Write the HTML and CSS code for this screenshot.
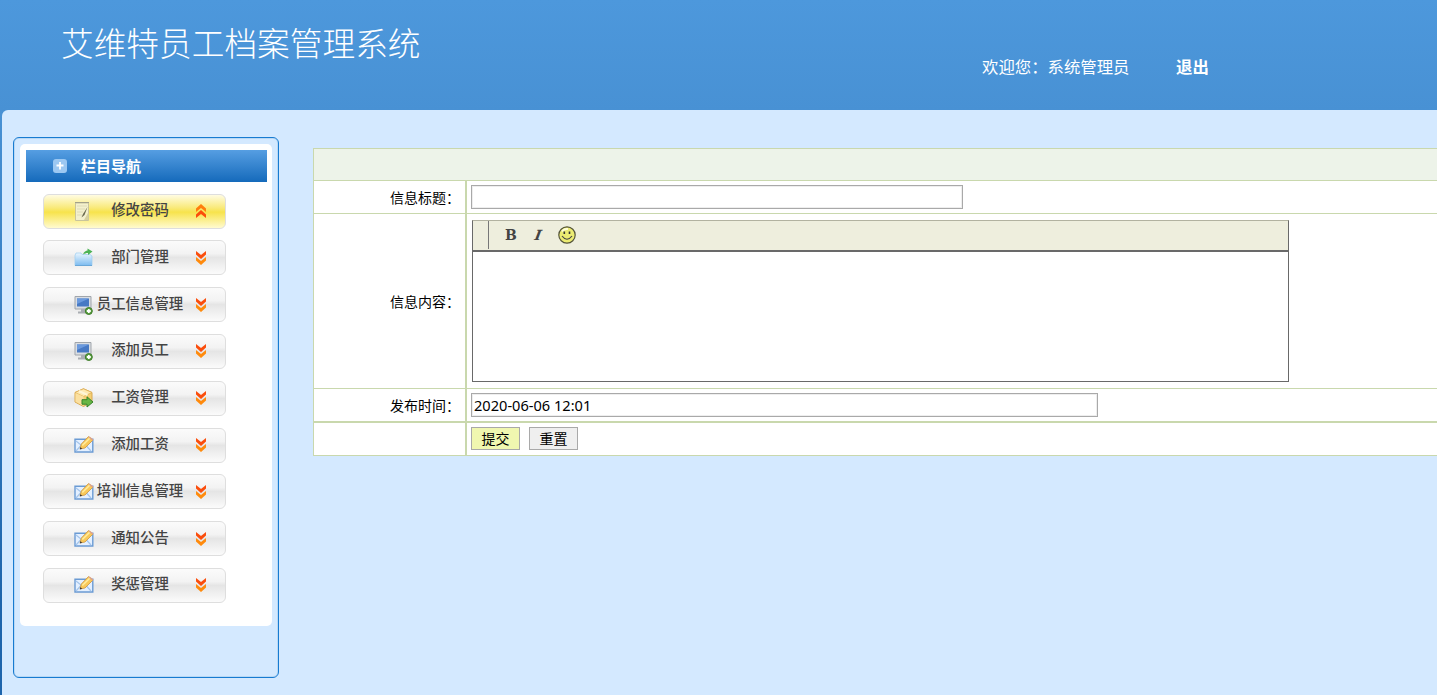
FILE: index.html
```html
<!DOCTYPE html>
<html lang="zh-CN">
<head>
  <meta charset="UTF-8">
  <title>艾维特员工档案管理系统</title>
  <link rel="stylesheet" href="styles.css">
</head>
<body>
  <svg class="defs" width="0" height="0">
    <defs>
      <linearGradient id="sky" x1="0" y1="0" x2="0" y2="1"><stop offset="0" stop-color="#eaf6ff"/><stop offset="1" stop-color="#7dbcf0"/></linearGradient>
    </defs>
    <symbol id="down" viewBox="0 0 10 14">
      <path d="M0 0L5 4L10 0V3.5L5 8L0 3.5Z" fill="#fb4d0c"/>
      <path d="M0 6L5 10L10 6V9.5L5 14L0 9.5Z" fill="#ff8a0c"/>
    </symbol>
    <symbol id="up" viewBox="0 0 10 14">
      <path d="M0 8V4.5L5 0L10 4.5V8L5 4Z" fill="#ff7d0c"/>
      <path d="M0 14V10.5L5 6L10 10.5V14L5 10Z" fill="#fb4d0c"/>
    </symbol>
    <symbol id="note" viewBox="0 0 20 20">
      <path d="M1.5 2H14.5V19.5H1.5Z" fill="#f3f0cd" stroke="#c9c59c"/>
      <path d="M1 1.5H15" stroke="#a3a18a"/>
      <path d="M3 5H13M3 8H11M3 11H9M3 14H8" stroke="#dedbb6"/>
      <path d="M13.5 6L9 13L7.5 16.5L10.5 14Z" fill="#6b6a4e"/>
      <path d="M10 19L14.5 11V19Z" fill="#d6d09e"/>
    </symbol>
    <symbol id="dept" viewBox="0 0 20 20">
      <path d="M1 7.5L2 5H7L8 6.5H16L18 8V17.5H1Z" fill="url(#sky)" stroke="#9ccdf0" stroke-width=".7"/>
      <path d="M1 17.5H18" stroke="#69a7d8"/>
      <path d="M9 6.5C10 3.5 12 2.5 13.5 2.5V.5L18.5 3.5L14 7V5C12 5 11 5.5 9 6.5Z" fill="#4db356"/>
    </symbol>
    <symbol id="pc" viewBox="0 0 20 20">
      <path d="M1 1.5H17V14H1Z" fill="#d9dde2" stroke="#a0a5ab"/>
      <path d="M3 3.5H15V11.5H3Z" fill="#4779c4"/>
      <path d="M3 3.5H15L3 9Z" fill="#6b9ade"/>
      <path d="M7 14H11V16.5H14V18.5H4V16.5H7Z" fill="#a9adb2"/>
      <circle cx="14.8" cy="16" r="3.5" fill="#5aa03f" stroke="#3f7d2c"/>
      <path d="M14.8 14V18M12.8 16H16.8" stroke="#fff" stroke-width="1.8"/>
    </symbol>
    <symbol id="box" viewBox="0 0 20 20">
      <path d="M9.5 .8L18 4.5V13.5L9.5 18.5L1 14V4.5Z" fill="#f5cf73" stroke="#d8a850"/>
      <path d="M1 4.5L9.5 8.5L18 4.5L9.5 .8Z" fill="#ffe9b0" stroke="#dba94d" stroke-width=".7"/>
      <path d="M9.5 8.5V18L1.5 13.7V5Z" fill="#fbe0a0"/>
      <path d="M5 3L13.5 7" stroke="#fff6d8" stroke-width="2"/>
      <path d="M8 11.7H13V8.8L19 14L13 19V16.2H8Z" fill="#67b644" stroke="#37832a"/>
    </symbol>
    <symbol id="mail" viewBox="0 0 20 20">
      <path d="M1 4.2H18.8V17H1Z" fill="#e4f0ff" stroke="#6b9bd4" stroke-width="1.4"/>
      <path d="M2 6L9.5 12L17 6M2 16L7 10.5M17 16L12 10.5" fill="none" stroke="#a4c5ec" stroke-width="1.2"/>
      <path d="M6 14L7.3 9L14.5 1.5L19 5L11 13Z" fill="#f9c95a" stroke="#c99645" stroke-width=".8"/>
      <path d="M8.3 10.5L16 3" stroke="#ffed9f" stroke-width="1.6"/>
      <path d="M15 2L19 5.2" stroke="#dda48c" stroke-width="1.6"/>
      <path d="M5.8 14.4L6.4 12.2L8.2 13.5Z" fill="#333"/>
    </symbol>
  </svg>

  <header class="header">
    <h1 class="title">艾维特员工档案管理系统</h1>
    <div class="user">欢迎您：系统管理员</div>
    <a class="logout">退出</a>
  </header>

  <div class="main">
    <aside class="sidebar">
      <div class="panel">
        <h2 class="panel-title">
          <svg class="plus" viewBox="0 0 14 14"><rect width="14" height="14" rx="3" fill="#9cc8f2"/><path d="M7 3V10.5M3.5 6.5H10.5" stroke="#fff" stroke-width="1.8"/></svg>
          <span>栏目导航</span>
        </h2>
        <ul class="menu">
          <li class="item active"><svg class="icon"><use href="#note"/></svg><span>修改密码</span><svg class="arrow"><use href="#up"/></svg></li>
          <li class="item"><svg class="icon"><use href="#dept"/></svg><span>部门管理</span><svg class="arrow"><use href="#down"/></svg></li>
          <li class="item"><svg class="icon"><use href="#pc"/></svg><span>员工信息管理</span><svg class="arrow"><use href="#down"/></svg></li>
          <li class="item"><svg class="icon"><use href="#pc"/></svg><span>添加员工</span><svg class="arrow"><use href="#down"/></svg></li>
          <li class="item"><svg class="icon"><use href="#box"/></svg><span>工资管理</span><svg class="arrow"><use href="#down"/></svg></li>
          <li class="item"><svg class="icon"><use href="#mail"/></svg><span>添加工资</span><svg class="arrow"><use href="#down"/></svg></li>
          <li class="item"><svg class="icon"><use href="#mail"/></svg><span>培训信息管理</span><svg class="arrow"><use href="#down"/></svg></li>
          <li class="item"><svg class="icon"><use href="#mail"/></svg><span>通知公告</span><svg class="arrow"><use href="#down"/></svg></li>
          <li class="item"><svg class="icon"><use href="#mail"/></svg><span>奖惩管理</span><svg class="arrow"><use href="#down"/></svg></li>
        </ul>
      </div>
    </aside>

    <form class="form">
      <div class="form-head"></div>
      <div class="row">
        <label class="label">信息标题：</label>
        <div class="field"><input class="text subject" type="text"></div>
      </div>
      <div class="row row-content">
        <label class="label">信息内容：</label>
        <div class="field">
          <div class="editor">
            <div class="toolbar">
              <span class="handle"></span>
              <b class="tool bold">B</b>
              <i class="tool italic">I</i>
              <svg class="smile" viewBox="0 0 18 18"><circle cx="9" cy="9" r="8.2" fill="#ecec72" stroke="#55553a" stroke-width="1.2"/><path d="M4 5.5Q6 2.5 10 3" stroke="#ffffd8" stroke-width="2" fill="none"/><path d="M6.3 5.5V8M11.5 5.5V8" stroke="#333" stroke-width="1.6"/><path d="M4 10Q9 16.5 14 10" fill="none" stroke="#444" stroke-width="1.2"/></svg>
            </div>
            <div class="editor-body"></div>
          </div>
        </div>
      </div>
      <div class="row">
        <label class="label">发布时间：</label>
        <div class="field"><input class="text time" type="text" value="2020-06-06 12:01"></div>
      </div>
      <div class="row row-last">
        <div class="label"></div>
        <div class="field"><button type="button" class="btn submit">提交</button><button type="button" class="btn">重置</button></div>
      </div>
    </form>
  </div>
</body>
</html>
```
FILE: styles.css
```css
* { box-sizing: border-box; }
body {
  margin: 0; height: 695px; overflow: hidden;
  display: flex; flex-direction: column;
  font-family: "Noto Sans", "Noto Sans CJK SC", sans-serif; font-size: 14px;
  background: linear-gradient(#4d98dc 0, #4891d4 110px, #1e65ac 600px);
}
.defs { position: absolute; }

.header { display: flex; height: 110px; flex: none; color: #fff; padding-left: 61px; }
.title { margin: 0; width: 921px; padding-top: 18px; font: 300 32.7px/48px "Noto Sans CJK SC", sans-serif; }
.user { width: 194px; padding-top: 54px; font: 16.4px/24px "Noto Sans CJK SC", sans-serif; }
.logout { padding-top: 54px; font: bold 16.4px/24px "Noto Sans CJK SC", sans-serif; }

.main {
  flex: 1; display: flex; align-items: flex-start; gap: 34px;
  margin-left: 2px; padding: 27px 0 0 11px;
  background: #d4e9ff; border-top-left-radius: 6px;
}

.sidebar {
  width: 266px; height: 541px; flex: none; padding: 6px;
  border: 1px solid #187bd1; border-radius: 6px; box-shadow: inset 0 0 0 1px #b8d8f5;
}
.panel { width: 252px; height: 482px; padding: 6px 5px 0 6px; background: #fff; border-radius: 5px; }
.panel-title {
  display: flex; align-items: center; gap: 14px;
  height: 32px; margin: 0; padding-left: 27px;
  font-size: 15px; color: #fff; background: linear-gradient(#569ee2, #156abb);
}
.panel-title span { margin-top: -2px; }
.plus { width: 14px; height: 14px; }
.menu { display: flex; flex-direction: column; gap: 11.8px; margin: 11.6px 0 0 17px; padding: 0; list-style: none; }
.item {
  display: grid; grid-template-columns: 20px 92px 10px; align-items: center;
  width: 183px; height: 35px; padding-left: 30px;
  border: 1px solid #dedede; border-radius: 6px;
  background: linear-gradient(#fbfbfb, #f3f3f3 38%, #e5e5e5 50%, #fbfbfb);
  font-size: 14.4px; font-weight: 500; color: #444;
}
.item span { text-align: center; line-height: 20px; white-space: nowrap; margin-top: -2px; }
.active { background: linear-gradient(#fffce2, #f9ea7c 38%, #f7e34c 52%, #fffbd0); }
.icon { width: 20px; height: 20px; }
.arrow { width: 10px; height: 14px; margin-left: 10px; }

.form { width: 1130px; flex: none; margin-top: 11px; border: 1px solid #c9d8ad; background: #fff; }
.form-head { height: 31px; background: #edf3e9; }
.row { display: flex; height: 33px; border-top: 1px solid #c9d8ad; }
.label {
  width: 153px; flex: none; display: flex; align-items: center; justify-content: flex-end;
  padding-right: 5px; border-right: 2px solid #c9d8ad; font-size: 14px;
}
.field { display: flex; align-items: center; padding-left: 4px; }
.row-content { height: 175px; }
.row-last { height: 34px; border-top-width: 2px; }
.row-last .field { padding-bottom: 2px; }
.text { height: 24px; padding: 0 2px; border: 1px solid #a9a9a9; font-family: inherit; font-size: 14.6px; box-shadow: inset 0 0 0 1px #eee; }
.subject { width: 492px; }
.time { width: 627px; }

.editor { width: 817px; height: 162px; margin-left: 1px; border: 1px solid #696969; border-top-color: #b2b2a0; }
.toolbar { display: flex; align-items: center; height: 31px; padding-bottom: 1px; background: #eeeedd; border-bottom: 2px solid #696969; }
.handle { width: 16px; height: 28px; border-right: 1px solid #777; margin-right: 16px; }
.tool { font: bold 14px/16px "DejaVu Serif", serif; color: #444; }
.bold { width: 30px; }
.italic { width: 23px; font-style: italic; transform: skewX(-10deg); }
.smile { width: 18px; height: 18px; }

.btn { width: 49px; height: 23px; padding: 0; margin-right: 9px; border: 1px solid #a9a9a9; background: #efefef; color: #000; font: 14px/19px "Noto Sans CJK SC", sans-serif; }
.submit { background: #f0f7b0; }
```
